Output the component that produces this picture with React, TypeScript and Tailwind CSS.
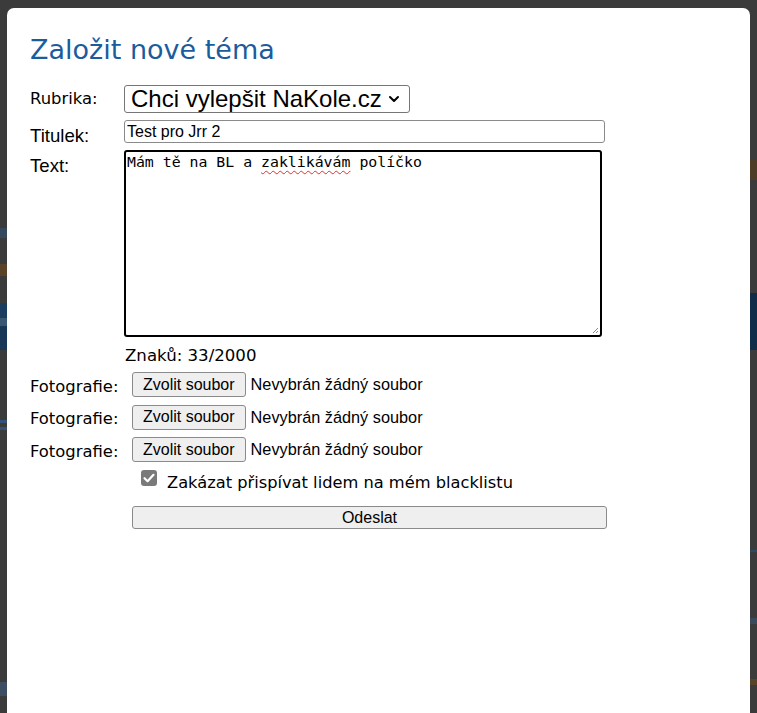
import { ChevronDown } from 'lucide-react';

const sans = "font-['DejaVu_Sans',Verdana,sans-serif]";
const arial = "font-['Liberation_Sans',Arial,sans-serif]";

function EdgeLeft() {
  return (
    <div className="w-[7px] shrink-0 flex flex-col">
      <div className="h-[228px]" />
      <div className="h-[10px] bg-[#34495e]" />
      <div className="h-[26px]" />
      <div className="h-[12px] bg-[#5a4326]" />
      <div className="h-[27px]" />
      <div className="h-[15px] bg-[#1d3d60]" />
      <div className="h-[8px] bg-[#3b5670]" />
      <div className="h-[24px] bg-[#183656]" />
      <div className="h-[70px]" />
      <div className="h-[3px] bg-[#2f5478]" />
      <div className="h-[4px]" />
      <div className="h-[3px] bg-[#2f5478]" />
      <div className="h-[252px]" />
      <div className="h-[14px] bg-[#3d4e62]" />
    </div>
  );
}

function EdgeRight() {
  return (
    <div className="w-[7px] shrink-0 flex flex-col">
      <div className="h-[160px]" />
      <div className="h-[20px] bg-[#4e3c26]" />
      <div className="h-[113px]" />
      <div className="h-[57px] bg-[#112c48]" />
      <div className="h-[200px]" />
      <div className="h-[2px] bg-[#2c4a6a]" />
      <div className="h-[66px]" />
      <div className="h-[6px] bg-[#394a5c]" />
      <div className="h-[55px]" />
      <div className="h-[6px] bg-[#5a4428]" />
    </div>
  );
}

function FileRow({ first }: { first?: boolean }) {
  return (
    <div className={first ? 'flex items-center h-[25px]' : 'flex items-center h-[25px] mt-[7.5px]'}>
      <span className={`${sans} w-[102px] text-[16.4px] leading-[20px] text-black pt-[4px]`}>Fotografie:</span>
      <div className={`${arial} h-[25px] px-[10px] flex items-center bg-[#efefef] border border-[#8a8a8a] rounded-[3px] text-[16px] text-black`}>
        Zvolit soubor
      </div>
      <span className={`${arial} ml-[5px] text-[16.3px] text-black`}>Nevybrán žádný soubor</span>
    </div>
  );
}

export default function App() {
  return (
    <div className="w-[757px] h-[713px] bg-[#3b3b3b] flex overflow-hidden">
      <EdgeLeft />
      <div className="flex-1 mt-[8px] bg-white rounded-t-[7px] pl-[23px] pt-[26px] flex flex-col">
        <h1 className={`${sans} text-[27px] leading-[32px] text-[#1b5c9c] font-normal`}>Založit nové téma</h1>

        <div className="flex items-center mt-[19px] h-[28px]">
          <span className={`${sans} w-[94px] text-[16.4px] leading-[20px] text-black`}>Rubrika:</span>
          <div className={`${arial} w-[286px] h-[28px] border border-[#767676] rounded-[3px] flex items-center justify-between pl-[6px] pr-[7px] text-[24px] text-black`}>
            <span>Chci vylepšit NaKole.cz</span>
            <ChevronDown size={16} strokeWidth={3} className="text-black" />
          </div>
        </div>

        <div className="flex items-start mt-[7px] h-[23px]">
          <span className={`${arial} w-[94px] mt-[4px] text-[18.6px] leading-[23px] text-black`}>Titulek:</span>
          <div className={`${arial} w-[481px] h-[23px] border border-[#8a8a8a] rounded-[3px] pl-[2px] flex items-center text-[16px] text-black`}>
            Test pro Jrr 2
          </div>
        </div>

        <div className="flex items-start mt-[7px]">
          <span className={`${arial} w-[94px] mt-[4px] text-[18.6px] leading-[23px] text-black`}>Text:</span>
          <div className="relative w-[478px] h-[187px] border-[2.5px] border-black rounded-[3px] pl-[1px] pt-[1px]">
            <p className="font-['DejaVu_Sans_Mono',monospace] text-[14.85px] leading-[18px] text-black">
              Mám tě na BL a{' '}
              <span className="underline decoration-wavy decoration-[#e03030] decoration-1 underline-offset-[3px]">zaklikávám</span>{' '}
              políčko
            </p>
            <svg className="absolute right-[1px] bottom-[1px]" width="7" height="7" viewBox="0 0 7 7">
              <path d="M6 1L1 6M6 4L4 6" stroke="#8a8a8a" strokeWidth="1" />
            </svg>
          </div>
        </div>

        <div className={`${sans} ml-[95px] mt-[8.5px] text-[16.6px] leading-[20px] text-black`}>Znaků: 33/2000</div>

        <div className="mt-[6.5px]">
          <FileRow first />
          <FileRow />
          <FileRow />
        </div>

        <div className="flex items-start mt-[8px] ml-[111px] h-[23px]">
          <svg width="16" height="16" viewBox="0 0 16 16">
            <rect x="0" y="0" width="16" height="16" rx="3" fill="#7a7a7a" />
            <path d="M3.5 8.2L6.6 11.2L12.5 4.8" fill="none" stroke="white" strokeWidth="2.2" strokeLinecap="round" strokeLinejoin="round" />
          </svg>
          <span className={`${sans} ml-[10px] mt-[2.5px] text-[16.25px] leading-[20px] text-black`}>
            Zakázat přispívat lidem na mém blacklistu
          </span>
        </div>

        <div className={`${arial} ml-[102px] mt-[13px] w-[475px] h-[23px] bg-[#efefef] border border-[#8a8a8a] rounded-[3px] flex items-center justify-center text-[16px] text-black`}>
          Odeslat
        </div>
      </div>
      <EdgeRight />
    </div>
  );
}
